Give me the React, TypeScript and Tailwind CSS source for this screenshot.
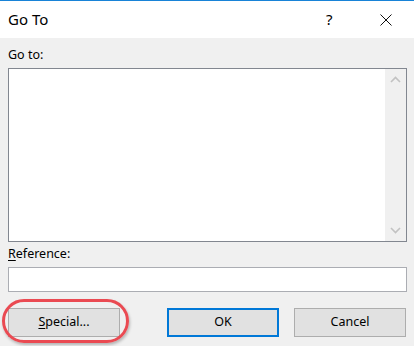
import React from "react";

export default function App() {
  return (
    <div
      className="relative w-[414px] h-[346px] overflow-hidden bg-[#f0f0f0] text-black"
      style={{ fontFamily: '"Noto Sans", "Open Sans", sans-serif' }}
    >
      {/* Title bar */}
      <div className="h-[38px] bg-white border-t border-[#1883d7] flex items-center pl-[8px]">
        <span className="text-[15px] leading-none">Go To</span>
        <span className="ml-auto text-[15px] leading-none w-[8px]">?</span>
        <div className="w-[46px] ml-[34px] flex items-center justify-start pl-[12px] pr-[22px]">
          <svg width="12" height="12" viewBox="0 0 12 12">
            <path d="M0.5 0.5 L11.5 11.5 M11.5 0.5 L0.5 11.5" stroke="#111" strokeWidth="1" fill="none" />
          </svg>
        </div>
      </div>

      {/* Body */}
      <div className="px-[8px] pr-[7px] text-[12.5px]">
        <div className="mt-[9px] leading-[16px]">Go to:</div>
        <div className="mt-[5px] h-[174px] border border-[#828790] bg-white flex">
          <div className="flex-1" />
          <div className="w-[21px] bg-[#f0f0f0] flex flex-col items-center justify-between py-[7px]">
            <svg width="11" height="7" viewBox="0 0 11 7">
              <path d="M1 6 L5.5 1.5 L10 6" stroke="#c2c2c2" strokeWidth="1.6" fill="none" />
            </svg>
            <svg width="11" height="7" viewBox="0 0 11 7">
              <path d="M1 1 L5.5 5.5 L10 1" stroke="#c2c2c2" strokeWidth="1.6" fill="none" />
            </svg>
          </div>
        </div>
        <div className="mt-[4px] leading-[16px]">
          <span className="underline underline-offset-2">R</span>eference:
        </div>
        <div className="mt-[5px] h-[25px] border border-[#abadb3] bg-white" />
        <div className="mt-[16px] flex items-center">
          <button className="w-[112px] h-[29px] bg-[#e1e1e1] border border-[#adadad] leading-none">
            <span className="underline underline-offset-2">S</span>pecial...
          </button>
          <button className="ml-[47px] w-[112px] h-[29px] bg-[#e1e1e1] border-2 border-[#0078d7] leading-none">
            OK
          </button>
          <button className="ml-[15px] w-[112px] h-[29px] bg-[#e1e1e1] border border-[#adadad] leading-none">
            Cancel
          </button>
        </div>
      </div>

      {/* Red annotation ellipse */}
      <div className="absolute left-[2px] top-[299px] w-[127px] h-[44px] rounded-[22px] border-[3px] border-[#ea4a52] shadow-[1px_2px_3px_rgba(0,0,0,0.25)]" />
    </div>
  );
}
